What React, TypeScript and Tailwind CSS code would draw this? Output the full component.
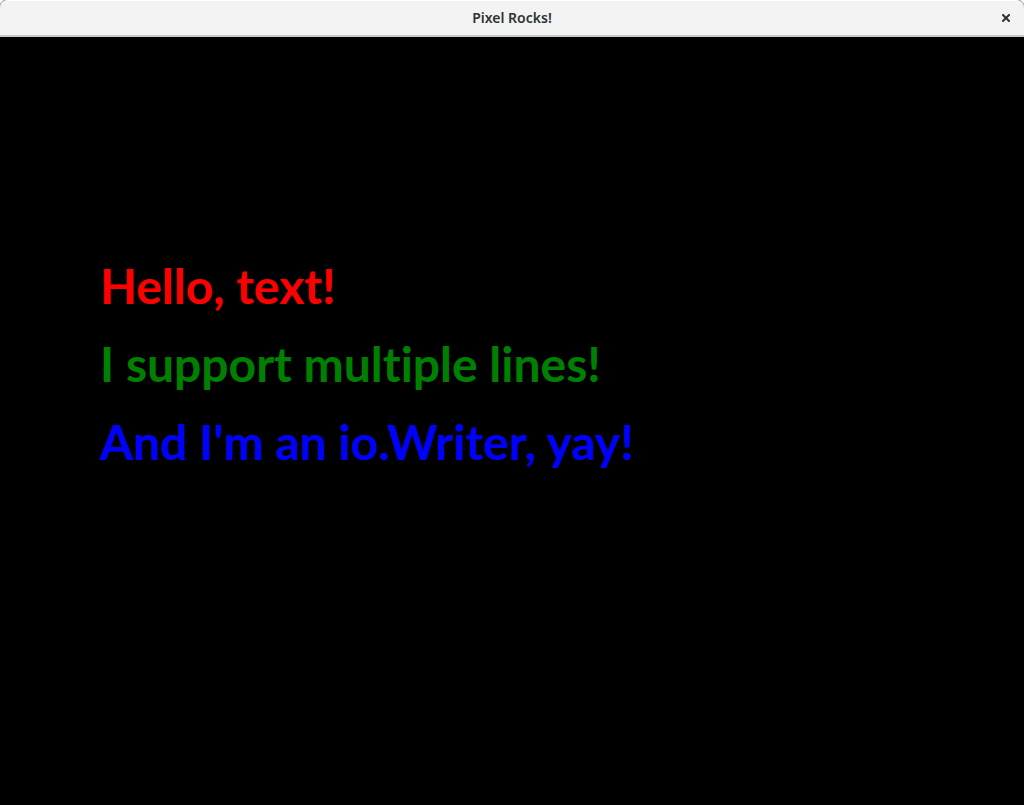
const lines = [
  { text: "Hello, text!", color: "text-[#ff0000]" },
  { text: "I support multiple lines!", color: "text-[#008000]" },
  { text: "And I'm an io.Writer, yay!", color: "text-[#0000ff]" },
];

export default function App() {
  return (
    <div className="flex min-h-screen flex-col bg-black">
      <div className="overflow-hidden bg-white">
        <header className="grid h-[37px] grid-cols-[1fr_auto_1fr] items-center rounded-t-lg border-t border-b-2 border-t-white border-b-[#c8c7c2] bg-[#f3f3f3] px-3 text-[#2e3436] ring-1 ring-[#a0a0a0]">
          <h1 className="col-start-2 font-['Noto_Sans',sans-serif] text-sm font-semibold">Pixel Rocks!</h1>
          <button type="button" aria-label="Close" className="justify-self-end p-0.5">
            <svg width="8" height="8" viewBox="0 0 8 8" stroke="currentColor" strokeWidth="2" strokeLinecap="square">
              <path d="M1 1 7 7M7 1 1 7" />
            </svg>
          </button>
        </header>
      </div>
      <main className="flex-1 px-[100px] pt-[210px] font-['Lato',sans-serif] text-5xl leading-[78px] font-bold [font-variant-ligatures:none]">
        {lines.map((line) => (
          <p key={line.text} className={line.color}>{line.text}</p>
        ))}
      </main>
    </div>
  );
}
